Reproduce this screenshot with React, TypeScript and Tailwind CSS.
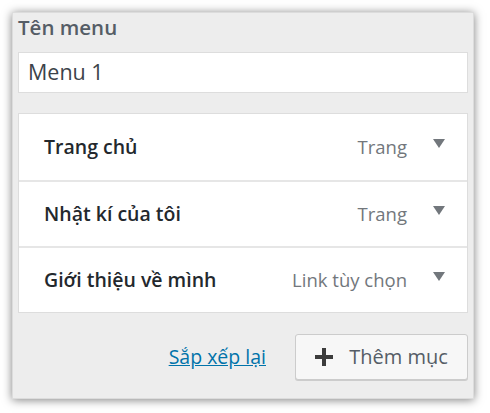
import React from "react";

const items = [
  { title: "Trang chủ", type: "Trang" },
  { title: "Nhật kí của tôi", type: "Trang" },
  { title: "Giới thiệu về mình", type: "Link tùy chọn" },
];

export default function App() {
  return (
    <div className="w-[490px] h-[413px] bg-white pt-[12px] pl-[12px] overflow-hidden" style={{ fontFamily: '"Open Sans", "Noto Sans", sans-serif' }}>
      <div className="w-[462px] h-[387px] bg-[#ededed] border border-[#dcdcdc] shadow-[0_1px_9px_rgba(0,0,0,0.5)] px-[5px] flex flex-col">
        <div className="text-[20.5px] text-[#555d66] font-semibold leading-none h-[28px] mb-[11px] flex items-center">Tên menu</div>
        <div className="h-[41px] bg-white border border-[#dddddd] flex items-center px-[9px] text-[21.5px] text-[#3c434a]">Menu 1</div>
        <div className="mt-[20px] bg-white border border-[#dddddd] flex flex-col">
          {items.map((it, i) => (
            <div key={i} className={"h-[66px] flex items-center pl-[25px] pr-[22px] " + (i > 0 ? "border-t-2 border-[#e6e6e6]" : "")}>
              <div className="flex-1 text-[19.5px] font-semibold text-[#23282d]">{it.title}</div>
              <div className="text-[18.5px] text-[#72777c] mr-[2px]">{it.type}</div>
              <svg width="12" height="10" viewBox="0 0 12 10" className="ml-[24px] -mt-[6px]">
                <path d="M0 0 L12 0 L6 9 Z" fill="#72777c" />
              </svg>
            </div>
          ))}
        </div>
        <div className="flex items-center justify-end mt-[21px]">
          <a className="text-[19.5px] text-[#0073aa] underline mr-[29px]">Sắp xếp lại</a>
          <button className="w-[173px] h-[46px] bg-[#f7f7f7] border border-[#cccccc] rounded-[3px] shadow-[0_1px_0_#cccccc] flex items-center justify-center text-[20px] text-[#555d66]">
            <svg width="18" height="18" viewBox="0 0 18 18" className="mr-[16px]">
              <rect x="7" y="0" width="4" height="18" fill="#3c3c3c" />
              <rect x="0" y="7" width="18" height="4" fill="#3c3c3c" />
            </svg>
            Thêm mục
          </button>
        </div>
      </div>
    </div>
  );
}
